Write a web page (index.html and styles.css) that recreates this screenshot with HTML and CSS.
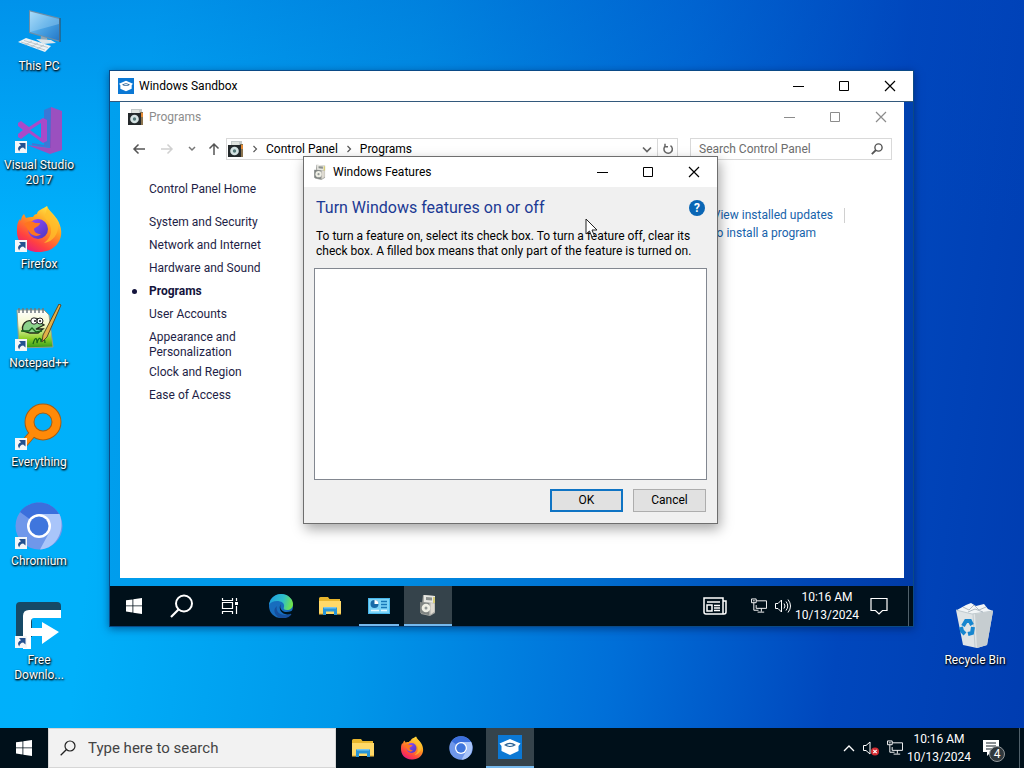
FILE: index.html
```html
<!DOCTYPE html>
<html lang="en">
<head>
<meta charset="utf-8">
<meta name="viewport" content="width=device-width, initial-scale=1">
<title>Desktop</title>
<link rel="stylesheet" href="styles.css">
</head>
<body>
<svg class="sprite" aria-hidden="true">
  <defs>
    <linearGradient id="g-fox" x1="0.8" y1="0" x2="0.2" y2="1"><stop offset="0" stop-color="#fff04a"/><stop offset="0.4" stop-color="#ff9a1f"/><stop offset="0.75" stop-color="#ff4141"/><stop offset="1" stop-color="#e31587"/></linearGradient>
    <linearGradient id="g-orb" x1="0" y1="0" x2="1" y2="1"><stop offset="0" stop-color="#9a4dff"/><stop offset="1" stop-color="#4a35c0"/></linearGradient>
    <linearGradient id="g-pc" x1="0" y1="0" x2="1" y2="1"><stop offset="0" stop-color="#9ed6f8"/><stop offset="0.5" stop-color="#4aa4e4"/><stop offset="1" stop-color="#2478c8"/></linearGradient>
    <linearGradient id="g-edge" x1="0" y1="0.2" x2="1" y2="0.4"><stop offset="0" stop-color="#1c9de0"/><stop offset="0.6" stop-color="#2fc0c8"/><stop offset="1" stop-color="#70e34a"/></linearGradient>
    <linearGradient id="g-note" x1="0" y1="0" x2="0" y2="1"><stop offset="0" stop-color="#fff"/><stop offset="0.4" stop-color="#f4f8c8"/><stop offset="0.75" stop-color="#8fd02a"/><stop offset="1" stop-color="#2f9a18"/></linearGradient>
  </defs>
  <symbol id="i-min" viewBox="0 0 12 12"><path d="M1 6.5h11" stroke="currentColor" fill="none"/></symbol>
  <symbol id="i-max" viewBox="0 0 12 12"><path d="M1.500 1.500h9v9h-9z" stroke="currentColor" fill="none"/></symbol>
  <symbol id="i-close" viewBox="0 0 12 12"><path d="M1 1l10 10M11 1L1 11" stroke="currentColor" stroke-width="1.200" fill="none"/></symbol>
  <symbol id="i-windows" viewBox="0 0 16 16"><path d="M0 2.300l6.500-.9v6.100H0zM7.300 1.300L16 0v7.500H7.300zM0 8.300h6.500v6.200L0 13.600zM7.300 8.300H16V16l-8.700-1.300z" fill="#fff"/></symbol>
  <symbol id="i-shortcut" viewBox="0 0 12 12"><path d="M0 0h12v12H0z" fill="#f4f6f8"/><path d="M4 2h6.500v6.500L8.200 6.400C6 6.500 4.500 8 4.300 10.500 2 7.500 3.300 5.400 6 4.300z" fill="#23508f"/></symbol>
  <symbol id="i-sandbox" viewBox="0 0 24 24"><path d="M0 0h24v24H0z" fill="#0b78d4"/><path d="M1.500 8.500L12 4l10.500 4.500-2 2.500v5L12 20l-8.500-4v-5z" fill="#fff"/><path d="M6 10Q12 5.500 18 10 12 14 6 10z" fill="#2a5f92"/><path d="M8.500 10Q12 8 15.500 10 12 12 8.500 10z" fill="#e8f5ff"/></symbol>
  <symbol id="i-folder" viewBox="0 0 22 18"><path d="M0 1.500Q0 0 1.500 0H9l1.500 2H21v15H0z" fill="#e8b62d"/><path d="M0 4h22v13H0z" fill="#ffd968"/><path d="M4 10.500h14V18h-3v-3.500H7V18H4z" fill="#2795d8"/><path d="M5 10h12v1.500H5z" fill="#77c5ee"/><path d="M0 16h4v1.500H0zM18 16h4v1.500h-4z" fill="#f0c046"/></symbol>
  <symbol id="i-firefox" viewBox="0 0 46 48"><path d="M31 1c1 4 6 7 10 13 5 8 6 17 1 24C37 45 30 47 22 47 9 47 0 37 1 24c0-5 1-8 3-10l1 2c0-3 1-5 3-7l2 4c2-1 5-1 7-1 1-2 2-3 4-3 0-4 6-5 10-8z" fill="url(#g-fox)"/><circle cx="22" cy="24" r="10" fill="url(#g-orb)"/><path d="M8 19c5-4 8-3 11-1h5c0 3-5 4-6 6 0 3 3 5 7 5-3 3-7 2-10 0-3-3-4-7-7-10z" fill="#ff751f"/><path d="M31 1c0 7-3 8-2 12 2 3 6 5 6 13 0 5-3 9-7 12 9-1 15-10 14-18-1-8-9-13-11-19z" fill="#ffc02b" opacity=".75"/></symbol>
  <symbol id="i-chromium" viewBox="0 0 48 48"><circle cx="24" cy="24" r="23.500" fill="#6f97ea"/><path d="M24 24L5 10C14-3 36-3 44 12H24z" fill="#3b6fdc"/><path d="M24 12h20.500C51 28 41 47 25 47.500L35 29z" fill="#a9c5fa"/><circle cx="24" cy="24" r="12" fill="#fff"/><circle cx="24" cy="24" r="9.500" fill="#3f76dd"/></symbol>
  <symbol id="i-net" viewBox="0 0 17 16"><path d="M5.500 2.500h11v8h-11V7M11 10.500v3.500M7 14.500h7M.5.5h5v4h-5zM3 4.500v8h5M2 2.500h2" stroke="#fff" fill="none"/></symbol>
  <symbol id="i-cpl" viewBox="0 0 16 16"><path d="M3 0h11v5H3z" fill="#c3c9c9"/><path d="M4 1h7v3H4z" fill="#dfe3de"/><path d="M12 3h3v13h-3z" fill="#8b744f"/><path d="M12 4h3v4h-3z" fill="#e48a35"/><path d="M0 4h13v12H0z" fill="#24292b"/><circle cx="6.500" cy="10" r="4.300" fill="#d4e2e2"/><circle cx="6.500" cy="10" r="1.700" fill="#557978"/></symbol>
  <symbol id="i-feat" viewBox="0 0 18 22"><path d="M4 1l12 1v17l-5 3-9-2z" fill="#a9aaa6"/><path d="M5 1l11 1v7L5 8z" fill="#e7e7e2"/><path d="M7 3l6 .6v3L7 6z" fill="#8b908e"/><path d="M1 8l9 1v12l-9-2z" fill="#7f8482"/><circle cx="7" cy="14" r="4.300" fill="#efefe5"/><circle cx="7" cy="14" r="1.500" fill="#929896"/><path d="M11.500 9l4 .5v8l-4 3z" fill="#dedad1"/><path d="M14 3h2v6h-2z" fill="#d6cc78"/></symbol>
</svg>

<div class="desktop">
  <nav class="shortcuts" aria-label="Desktop shortcuts">
    <a class="shortcut" href="#"><span class="art"><svg viewBox="0 0 48 48"><path d="M14 3l31 8v24l-31-9z" fill="#6c8ea8"/><path d="M15 4.500l29 7.500v21.500l-29-8.400z" fill="url(#g-pc)"/><path d="M15 4.500l29 7.500v5L15 25z" fill="#c5e8fb" opacity=".3"/><path d="M45 11v24" stroke="#334858"/><path d="M26 29l6 2 1 4-8 0z" fill="#91a7b5"/><path d="M21 32l15 1 5 3-13 1z" fill="#dce5ea"/><path d="M3 35l8-4 25 8-6 6z" fill="#edf2f5"/><path d="M6 35l24 8M9 33.500l24 7M10 38l7-4M16 40l7-4M22 42l7-4" stroke="#abb7bf" stroke-width=".7"/></svg></span><span>This PC</span></a>
    <a class="shortcut" href="#"><span class="art"><svg viewBox="0 0 48 48"><path d="M36 1l11 4v39l-12 4L12 39l23 3z" fill="#9b50bf"/><path d="M36 1v41l-19-3v-2l12 2V4z" fill="#8145b4" opacity=".45"/><path d="M3 17l3-2 8 6 14-9 4 2v21l-4 2-14-10-8 6-3-2v-3l5-4-5-4zM15 24l11 8V17z" fill="#a94ac9" fill-rule="evenodd"/></svg><svg class="badge"><use href="#i-shortcut"/></svg></span><span>Visual Studio 2017</span></a>
    <a class="shortcut" href="#"><span class="art"><svg><use href="#i-firefox"/></svg><svg class="badge"><use href="#i-shortcut"/></svg></span><span>Firefox</span></a>
    <a class="shortcut" href="#"><span class="art"><svg viewBox="0 0 48 48"><path d="M2 6h27l5 5 4 32-34 1z" fill="url(#g-note)" stroke="#93a08a"/><path d="M4 4v5M8 4v5M12 4v5M16 4v5M20 4v5M24 4v5M28 4v5" stroke="#6e7880" stroke-width="1.500"/><path d="M8 27c-2-6 3-12 9-10 2-4 9-3 9 2l3 2-8 4h7l-5 4h-8z" fill="#8bd18a" stroke="#252b1b" stroke-width="1.300"/><circle cx="19" cy="17" r="3.200" fill="#fff" stroke="#222"/><circle cx="25" cy="17" r="3" fill="#fff" stroke="#222"/><circle cx="20" cy="17" r="1" fill="#111"/><circle cx="25" cy="17" r="1" fill="#111"/><path d="M6 27h8l3-3 4 4 6-1M18 40c2-7 4-7 4-1 2-7 4-5 4-1 2-6 4-3 4 1" stroke="#176618" stroke-width="1.300" fill="none"/><path d="M46 1l-2-1-16 31-1 7 5-5z" fill="#e2b148" stroke="#5d4825"/></svg><svg class="badge"><use href="#i-shortcut"/></svg></span><span>Notepad++</span></a>
    <a class="shortcut" href="#"><span class="art"><svg viewBox="0 0 48 48"><path d="M19 29L7 43" stroke="#a35d15" stroke-width="8"/><circle cx="28" cy="19" r="13.500" stroke="#a35d15" stroke-width="10" fill="none"/><path d="M19 29L8 42" stroke="#ff8a08" stroke-width="6"/><circle cx="28" cy="19" r="13.500" stroke="#ff8a08" stroke-width="8" fill="none"/></svg><svg class="badge"><use href="#i-shortcut"/></svg></span><span>Everything</span></a>
    <a class="shortcut" href="#"><span class="art"><svg><use href="#i-chromium"/></svg><svg class="badge"><use href="#i-shortcut"/></svg></span><span>Chromium</span></a>
    <a class="shortcut" href="#"><span class="art"><svg viewBox="0 0 48 48"><path d="M1 5q0-4 4-4h37q4 0 4 4v5H17v26H1z" fill="#164966"/><path d="M8 15q0-6 6-6h32v8H19q-3 0-3 4v6h11v-6l17 10-17 12v-8H16v13H8z" fill="#fff"/></svg><svg class="badge"><use href="#i-shortcut"/></svg></span><span>Free<br>Downlo...</span></a>
  </nav>

  <a class="shortcut recycle" href="#"><span class="art"><svg viewBox="0 0 48 48"><path d="M6 9l9-5 5-2 5 3 8-2 4 5 5 2-9 5-20-1z" fill="#f2f5f7"/><path d="M5 9l16 4 21-3-6 34-10 3-14-3z" fill="#dfe4e6"/><path d="M5 9l16 4 21-3M22 13l2 33" fill="none" stroke="#c1cbd0"/><path d="M24 13l18-3-6 34-10 3z" fill="#c6cdd0"/><path d="M12 6l6 3 5-5 5 5 7-3M17 11l7-3 8 3" fill="none" stroke="#aeb9c2"/><path d="M12 25l3-5h4l2 4" fill="none" stroke="#1686cf" stroke-width="4"/><path d="M22 26l-1 6-4 1M14 33l-3-3-1-4" fill="none" stroke="#1686cf" stroke-width="4"/></svg></span><span>Recycle Bin</span></a>

  <section class="sandbox" aria-label="Windows Sandbox">
    <header class="titlebar">
      <svg class="app-icon"><use href="#i-sandbox"/></svg>
      <h1 class="caption">Windows Sandbox</h1>
      <div class="controls">
        <button aria-label="Minimize"><svg><use href="#i-min"/></svg></button>
        <button aria-label="Maximize"><svg><use href="#i-max"/></svg></button>
        <button aria-label="Close"><svg><use href="#i-close"/></svg></button>
      </div>
    </header>

    <div class="guest">
      <section class="explorer" aria-label="Programs">
        <header class="titlebar inactive">
          <svg class="app-icon"><use href="#i-cpl"/></svg>
          <h2 class="caption">Programs</h2>
          <div class="controls">
            <button aria-label="Minimize"><svg><use href="#i-min"/></svg></button>
            <button aria-label="Maximize"><svg><use href="#i-max"/></svg></button>
            <button aria-label="Close"><svg><use href="#i-close"/></svg></button>
          </div>
        </header>
        <div class="toolbar">
          <div class="history">
            <button aria-label="Back"><svg viewBox="0 0 14 14"><path d="M13 7H2M6.500 2.500L2 7l4.500 4.500" stroke="#555" stroke-width="1.500" fill="none"/></svg></button>
            <button aria-label="Forward" disabled><svg viewBox="0 0 14 14"><path d="M1 7h11M7.500 2.500L12 7l-4.500 4.500" stroke="#d0d0d0" stroke-width="1.500" fill="none"/></svg></button>
            <button class="slim" aria-label="Recent locations"><svg viewBox="0 0 14 14"><path d="M4 5l3 3 3-3" stroke="#777" stroke-width="1.500" fill="none"/></svg></button>
            <button class="slim" aria-label="Up"><svg viewBox="0 0 14 14"><path d="M7 13V2M2.500 6.500L7 2l4.500 4.500" stroke="#555" stroke-width="1.500" fill="none"/></svg></button>
          </div>
          <div class="address">
            <svg class="app-icon"><use href="#i-cpl"/></svg>
            <svg class="crumb" viewBox="0 0 6 8"><path d="M1.500 1l3 3-3 3" stroke="#555" stroke-width="1.200" fill="none"/></svg>
            <a href="#">Control Panel</a>
            <svg class="crumb" viewBox="0 0 6 8"><path d="M1.500 1l3 3-3 3" stroke="#555" stroke-width="1.200" fill="none"/></svg>
            <a href="#">Programs</a>
            <button class="drop" aria-label="Previous locations"><svg viewBox="0 0 12 12"><path d="M2 4.500l4 4 4-4" stroke="#666" stroke-width="1.700" fill="none"/></svg></button>
            <button class="refresh" aria-label="Refresh"><svg viewBox="0 0 12 12"><path d="M8.500 2.600A4.200 4.200 0 1 1 3.500 2.800M3 .8v3h3" stroke="#666" stroke-width="1.500" fill="none"/></svg></button>
          </div>
          <label class="search">
            <input type="search" aria-label="Search Control Panel" placeholder="Search Control Panel">
            <svg viewBox="0 0 12 12"><circle cx="7.500" cy="4.500" r="3.600" stroke="#555" stroke-width="1.400" fill="none"/><path d="M5 7L.8 11.200" stroke="#555" stroke-width="1.800"/></svg>
          </label>
        </div>
        <div class="content">
          <nav class="categories" aria-label="Control Panel">
            <a class="home" href="#">Control Panel Home</a>
            <ul>
              <li><a href="#">System and Security</a></li>
              <li><a href="#">Network and Internet</a></li>
              <li><a href="#">Hardware and Sound</a></li>
              <li class="current"><a href="#">Programs</a></li>
              <li><a href="#">User Accounts</a></li>
              <li class="double"><a href="#">Appearance and<br>Personalization</a></li>
              <li><a href="#">Clock and Region</a></li>
              <li><a href="#">Ease of Access</a></li>
            </ul>
          </nav>
          <div class="tasks">
            <a class="divided" href="#">View installed updates</a>
            <a href="#">to install a program</a>
          </div>
        </div>
      </section>

      <section class="dialog" role="dialog" aria-label="Windows Features">
        <header class="titlebar">
          <svg class="app-icon"><use href="#i-feat"/></svg>
          <h2 class="caption">Windows Features</h2>
          <div class="controls">
            <button aria-label="Minimize"><svg><use href="#i-min"/></svg></button>
            <button aria-label="Maximize"><svg><use href="#i-max"/></svg></button>
            <button aria-label="Close"><svg><use href="#i-close"/></svg></button>
          </div>
        </header>
        <div class="dialog-body">
          <div class="heading">
            <h3>Turn Windows features on or off</h3>
            <button class="help" aria-label="Help">?</button>
          </div>
          <p>To turn a feature on, select its check box. To turn a feature off, clear its<br>check box. A filled box means that only part of the feature is turned on.</p>
          <div class="feature-list"></div>
          <div class="actions">
            <button class="primary">OK</button>
            <button>Cancel</button>
          </div>
        </div>
        <svg class="cursor" viewBox="0 0 13 20"><path d="M1 1v15l3.500-3 2.500 6 2.500-1L7 12h5z" fill="#fff" stroke="#222"/></svg>
      </section>

      <footer class="taskbar">
        <button class="task" aria-label="Start"><svg class="start"><use href="#i-windows"/></svg></button>
        <button class="task" aria-label="Search"><svg class="s24" viewBox="0 0 24 24"><circle cx="14" cy="9.500" r="8" stroke="#fff" stroke-width="2" fill="none"/><path d="M8.500 15.500L1 23" stroke="#fff" stroke-width="2.200"/></svg></button>
        <button class="task" aria-label="Task View"><svg class="s18" viewBox="0 0 18 18"><path d="M1.500 1v2.500h10V1M1.500 17v-2.500h10V17M1.500 5.500h10v6h-10zM15.500 1v3M15.500 9v8" stroke="#fff" stroke-width="1.200" fill="none"/><path d="M14 5h3v3h-3z" fill="#fff"/></svg></button>
        <div class="apps">
          <button class="task" aria-label="Microsoft Edge"><svg class="s24" viewBox="0 0 24 24"><circle cx="12" cy="12" r="12" fill="#176dbe"/><path d="M0 11C1 4 6 0 12 0c7 0 12 5 12 10 0 4-3 6-6 6-3 0-4-1-3-3 1-4-3-6-7-6-4 0-6 1-8 4z" fill="url(#g-edge)"/><path d="M8 12c-2 6 4 11 13 8 1 0 2 0 1 1-3 3-7 4-11 3-5-2-8-8-3-12z" fill="#164f9d"/><path d="M12 10c-2 3 0 7 4 8 2 0 5 0 8-2v2c-2 2-5 3-8 2-4-1-7-6-4-10z" fill="#00131b"/></svg></button>
          <button class="task" aria-label="File Explorer"><svg class="folder"><use href="#i-folder"/></svg></button>
          <button class="task running" aria-label="Control Panel"><svg class="folder" viewBox="0 0 22 18"><path d="M0 1h22v16H0z" fill="#48b7ec"/><path d="M1 2h20v14H1z" fill="#7bd4f8"/><circle cx="6.500" cy="7" r="4" fill="#176ba8"/><path d="M6.500 7V3a4 4 0 0 1 4 4z" fill="#fff"/><path d="M13 4.500h6M13 7.500h6M13 10.500h6" stroke="#1878b8" stroke-width="1.500"/><path d="M3 13.500h8M13 13.500h6" stroke="#e8f8ff" stroke-width="1.500"/></svg></button>
          <button class="task active" aria-label="Windows Features"><svg class="feat"><use href="#i-feat"/></svg></button>
        </div>
        <div class="tray">
          <button class="news" aria-label="News"><svg class="s24" viewBox="0 0 24 18"><path d="M1 1h19v16H3q-2 0-2-2zM20 4h3v11q0 2-2 2h-2M4 5h13M4 8h5v6H4zM11 8.500h6M11 11h6M11 13.500h6" stroke="#fff" stroke-width="1.500" fill="none"/></svg></button>
          <button aria-label="Network"><svg class="s16"><use href="#i-net"/></svg></button>
          <button aria-label="Volume"><svg class="s16" viewBox="0 0 16 16"><path d="M.5 5.500H3l3.500-3.500v12L3 10.500H.5zM9 5.500q2 2.500 0 5M11 3.500q3.500 4.500 0 9M13 1.500q5 6.500 0 13" stroke="#fff" fill="none"/></svg></button>
          <time class="clock">10:16 AM<br>10/13/2024</time>
          <button class="note" aria-label="Action center"><svg class="s18" viewBox="0 0 18 18"><path d="M1 1.500h16v12h-4.500L9 17l-3.500-3.500H1z" stroke="#fff" stroke-width="1.200" fill="none"/></svg></button>
        </div>
      </footer>
    </div>
  </section>
</div>

<footer class="taskbar host">
  <button class="task" aria-label="Start"><svg class="start"><use href="#i-windows"/></svg></button>
  <label class="host-search">
    <svg viewBox="0 0 16 16"><circle cx="10" cy="6" r="5" stroke="#222" stroke-width="1.200" fill="none"/><path d="M6.500 9.500L.7 15.300" stroke="#222" stroke-width="1.300"/></svg>
    <input type="text" aria-label="Type here to search" placeholder="Type here to search">
  </label>
  <div class="apps">
    <button class="task" aria-label="File Explorer"><svg class="folder"><use href="#i-folder"/></svg></button>
    <button class="task" aria-label="Firefox"><svg class="s24"><use href="#i-firefox"/></svg></button>
    <button class="task" aria-label="Chromium"><svg class="s24"><use href="#i-chromium"/></svg></button>
    <button class="task active" aria-label="Windows Sandbox"><svg class="s24"><use href="#i-sandbox"/></svg></button>
  </div>
  <div class="tray">
    <button aria-label="Show hidden icons"><svg class="s12" viewBox="0 0 12 12"><path d="M1 9l5-5 5 5" stroke="#fff" stroke-width="1.300" fill="none"/></svg></button>
    <button aria-label="Volume muted"><svg class="s16" viewBox="0 0 16 16"><path d="M.5 5.500H3L7 2v12l-4-3.500H.5z" stroke="#fff" fill="none"/><circle cx="12" cy="11.500" r="4" fill="#d52c32"/><path d="M10.300 9.800l3.400 3.400M13.700 9.800l-3.400 3.400" stroke="#fff" stroke-width="1.200"/></svg></button>
    <button aria-label="Network"><svg class="s16"><use href="#i-net"/></svg></button>
    <time class="clock">10:16 AM<br>10/13/2024</time>
    <button class="note" aria-label="Notifications"><svg class="s18" viewBox="0 0 18 18"><path d="M1 1h16v12H9l-4 4v-4H1z" fill="#fff"/><path d="M4 4h10M4 7h10M4 10h6" stroke="#16222a" stroke-width="1.200"/></svg><span class="count">4</span></button>
  </div>
</footer>
</body>
</html>
```
FILE: styles.css
```css
* { box-sizing: border-box; }

body {
  margin: 0;
  min-height: 100vh;
  display: flex;
  flex-direction: column;
  font: 12px/15px Roboto, "Open Sans", "Noto Sans", sans-serif;
  color: #000;
  background:
    linear-gradient(180deg, rgba(0, 70, 190, 0.28), rgba(0, 70, 190, 0) 30%),
    linear-gradient(97deg, #00b0fc 0%, #00b0fa 14%, #0098ea 38%, #006fd8 62%, #0047bd 82%, #003cb0 100%);
}

h1, h2, h3, p, ul { margin: 0; padding: 0; font-weight: 400; }
ul { list-style: none; }
a { color: inherit; text-decoration: none; }
svg { display: block; flex: none; }
button { font: inherit; color: inherit; border: 0; padding: 0; background: none; }
input { font: inherit; border: 0; padding: 0; background: none; outline: none; min-width: 0; flex: 1; }
.sprite { position: absolute; width: 0; height: 0; }

.desktop { position: relative; flex: 1; padding-top: 7px; }

.shortcuts { display: grid; grid-auto-rows: 99px; width: 78px; }
.shortcut {
  display: flex;
  flex-direction: column;
  align-items: center;
  gap: 4px;
  width: 78px;
  color: #fff;
  text-align: center;
  text-shadow: 1px 1px 2px #000, 0 1px 2px #000;
}
.art { position: relative; width: 48px; height: 48px; }
.art svg { width: 48px; height: 48px; }
.art .badge { position: absolute; left: 0; bottom: 1px; width: 12px; height: 12px; }
.recycle { position: absolute; right: 10px; bottom: 60px; }

.sandbox {
  position: absolute;
  inset: 70px 110px 101px 109px;
  display: flex;
  flex-direction: column;
  border: 1px solid #0b4a86;
  box-shadow: 0 2px 8px rgba(0, 20, 70, 0.5);
}

.titlebar { display: flex; align-items: center; height: 30px; padding-left: 8px; background: #fff; }
.titlebar .app-icon { margin-right: 5px; }
.caption { flex: 1; font-size: 12px; line-height: 15px; }
.app-icon { width: 16px; height: 16px; }
.controls { display: flex; height: 100%; }
.controls button { display: grid; place-items: center; width: 46px; }
.controls svg { width: 12px; height: 12px; }
.inactive { color: #8c8c8c; }

.guest {
  position: relative;
  flex: 1;
  display: flex;
  flex-direction: column;
  gap: 8px;
  border-top: 1px solid #33597c;
  background: linear-gradient(97deg, #00a0ee 0%, #0092e6 35%, #006fd0 62%, #0045b4 88%, #003aa6 100%);
}

.explorer { flex: 1; margin: 0 9px 0 10px; background: #fff; }
.toolbar { display: flex; align-items: center; gap: 12px; height: 34px; padding: 0 12px 0 9px; }
.history { display: flex; align-items: center; gap: 8px; margin-right: -7px; }
.history button { width: 20px; display: grid; place-items: center; }
.history .slim { width: 14px; }
.history svg { width: 14px; height: 14px; }
.address {
  flex: 1;
  display: flex;
  align-items: center;
  height: 22px;
  padding-left: 1px;
  border: 1px solid #d9d9d9;
}
.crumb { width: 6px; height: 8px; margin: 0 8px; }
.address button { display: grid; place-items: center; width: 20px; height: 20px; }
.address button svg { width: 12px; height: 12px; }
.address .drop { margin-left: auto; }
.address .refresh { border-left: 1px solid #d9d9d9; }
.search {
  display: flex;
  align-items: center;
  width: 202px;
  height: 22px;
  padding: 0 8px;
  border: 1px solid #d9d9d9;
}
.search svg { width: 12px; height: 12px; }
.search input::placeholder { color: #6d6d6d; opacity: 1; }

.content { display: flex; justify-content: space-between; padding: 16px 59px 0 29px; }
.categories { color: #1e1e46; }
.home { display: block; margin-bottom: 18px; }
.categories li { margin-bottom: 8px; }
.categories .double { margin-bottom: 5px; }
.current { position: relative; font-weight: 700; color: #14143c; }
.current::before {
  content: "";
  position: absolute;
  left: -17px;
  top: 5px;
  width: 5px;
  height: 5px;
  border-radius: 50%;
  background: #14143c;
}
.tasks { display: flex; flex-direction: column; align-items: flex-start; gap: 3px; padding-top: 26px; color: #1763ab; }
.divided { padding-right: 11px; border-right: 1px solid #d0d0d0; }

.dialog {
  position: absolute;
  left: 193px;
  top: 54px;
  width: 415px;
  border: 1px solid #6e6e6e;
  background: #f0f0f0;
  box-shadow: 2px 5px 12px rgba(0, 0, 0, 0.35);
}
.dialog-body { padding: 10px 10px 11px; }
.heading { display: flex; align-items: center; justify-content: space-between; height: 22px; padding: 0 2px; }
.heading h3 { font-size: 16px; line-height: 22px; color: #1c3a94; }
.help {
  width: 16px;
  height: 16px;
  border-radius: 50%;
  background: #0a66b5;
  color: #fff;
  font-weight: 700;
  line-height: 16px;
}
.dialog p { padding: 10px 2px 9px; }
.feature-list { height: 212px; border: 1px solid #828790; background: #fff; }
.actions { display: flex; justify-content: flex-end; gap: 10px; padding-top: 9px; padding-right: 1px; }
.actions button { width: 73px; height: 23px; border: 1px solid #adadad; background: #e1e1e1; }
.actions .primary { border: 2px solid #0f74c4; }
.cursor { position: absolute; left: 281px; top: 61px; width: 13px; height: 20px; }

.taskbar { display: flex; height: 40px; padding-right: 4px; background: #00101a; color: #fff; }
.task { display: grid; place-items: center; width: 48px; height: 40px; }
.apps { display: flex; gap: 1px; margin-left: 3px; }
.active { background: #35434b; border-bottom: 2px solid #76b9ed; }
.running { background: linear-gradient(#76b9ed, #76b9ed) center bottom / 40px 2px no-repeat; }
.start, .s16 { width: 16px; height: 16px; }
.s12 { width: 12px; height: 12px; }
.s18 { width: 18px; height: 18px; }
.s24 { width: 24px; height: 24px; }
.folder { width: 22px; height: 18px; }
.feat { width: 18px; height: 22px; }
.tray { display: flex; align-items: center; gap: 8px; margin-left: auto; border-right: 1px solid #50606a; }
.news { margin-right: 16px; }
.clock { width: 64px; margin-left: -4px; line-height: 18px; text-align: center; white-space: nowrap; }
.note { position: relative; width: 18px; margin: 0 20px 0 3px; }
.host .note { margin-right: 19px; }
.count {
  position: absolute;
  left: 7px;
  top: 7px;
  width: 16px;
  height: 16px;
  border: 1px solid #93999c;
  border-radius: 50%;
  background: #30383d;
  line-height: 14px;
}

.host-search {
  display: flex;
  align-items: center;
  gap: 12px;
  width: 288px;
  padding: 0 11px;
  border: 1px solid #d6d6d6;
  background: #f2f2f2;
  font-size: 15px;
}
.host-search svg { width: 16px; height: 16px; }
.host-search input::placeholder { color: #444; opacity: 1; }
```
